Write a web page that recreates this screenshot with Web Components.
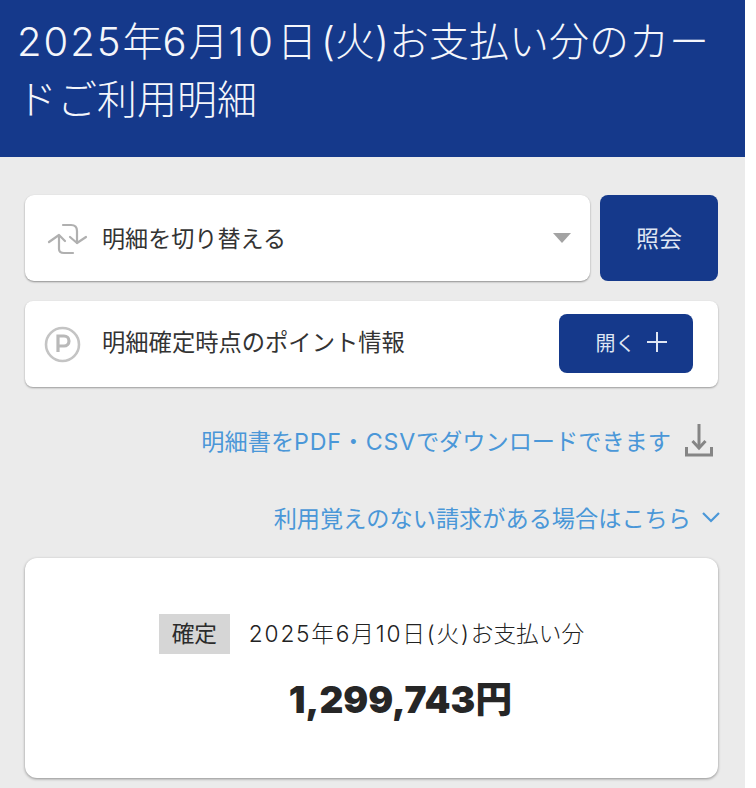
<!DOCTYPE html>
<html lang="ja">
<head>
<meta charset="utf-8">
<style>
html, body { margin: 0; padding: 0; background: #fff; }
body { font-family: Roboto, "Noto Sans CJK JP", sans-serif; width: 745px; height: 788px; overflow: hidden; }
</style>
</head>
<body>
<statement-page></statement-page>

<script>
const FONT = 'Roboto, "Noto Sans CJK JP", sans-serif';
const LATIN = 'Inter, "Noto Sans CJK JP", sans-serif';

class StatementPage extends HTMLElement {
    constructor() {
        super();
        const root = this.attachShadow({mode: 'open'});
        root.innerHTML = `
        <style>
            :host { display: block; background: #ebebeb; height: 788px; font-family: ${FONT}; }
            main { display: flex; flex-direction: column; padding: 38px 27px 0 25px; }
            .search { display: flex; gap: 10px; height: 86px; }
            .search statement-select { flex: 1; }
            point-panel { margin-top: 20px; }
            help-link.pdf { margin-top: 36px; }
            help-link.dispute { margin-top: 43px; }
            total-card { margin-top: 24px; }
        </style>
        <page-header></page-header>
        <main>
            <div class="search">
                <statement-select>明細を切り替える</statement-select>
                <blue-button style="width:118px;font-size:23px;padding-bottom:2px;">照会</blue-button>
            </div>
            <point-panel>明細確定時点のポイント情報</point-panel>
            <help-link class="pdf" icon="download">明細書を<span style="letter-spacing:.800px">PDF・CSV</span>でダウンロードできます</help-link>
            <help-link class="dispute" icon="chevron">利用覚えのない請求がある場合はこちら</help-link>
            <total-card></total-card>
        </main>`;
    }
}

class PageHeader extends HTMLElement {
    constructor() {
        super();
        const root = this.attachShadow({mode: 'open'});
        root.innerHTML = `
        <style>
            :host { display: block; box-sizing: border-box; height: 157px; padding: 13px 30px 0 17px; background: #15398b; color: #f4f6fb; font-family: ${LATIN}; font-weight: 300; font-size: 40px; line-height: 58px; word-break: break-all; }
            .n { letter-spacing: 2px; }
            .m { letter-spacing: 4px; }
            .p { margin-left: 4px; }
        </style>
        <span class="n">2025</span>年<span class="n">6</span>月<span class="m">10</span>日<span class="p">(</span>火)お支払い分のカードご利用明細`;
    }
}

class BlueButton extends HTMLElement {
    constructor() {
        super();
        const root = this.attachShadow({mode: 'open'});
        root.innerHTML = `
        <style>
            :host { display: flex; align-items: center; justify-content: center; box-sizing: border-box; background: #15398b; color: #dfe6f3; border-radius: 8px; }
        </style>
        <slot></slot>`;
    }
}

class StatementSelect extends HTMLElement {
    constructor() {
        super();
        const root = this.attachShadow({mode: 'open'});
        root.innerHTML = `
        <style>
            :host { display: flex; align-items: center; background: #fff; border-radius: 9px; box-shadow: 0 1px 2px rgba(0,0,0,.4); padding: 0 19px 0 21px; color: #333; font-size: 23.100px; }
            svg { flex: none; margin-right: 14px; }
            span { flex: 1; padding-bottom: 3px; }
            i { width: 0; height: 0; border: 9px solid transparent; border-top: 10px solid #a3a3a3; border-bottom: 0; }
        </style>
        <svg width="42" height="34" viewBox="0 0 42 34" fill="none" stroke="#b0b0b0" stroke-width="2.200" stroke-linecap="round" stroke-linejoin="round">
            <path d="M3 21 13 14l6 6"/>
            <path d="M13 15v13q0 4 5 4h9"/>
            <path d="M24 16l7 6 9-6"/>
            <path d="M17 4h8q6 0 6 6v12"/>
        </svg>
        <span><slot></slot></span>
        <i></i>`;
    }
}

class PointPanel extends HTMLElement {
    constructor() {
        super();
        const root = this.attachShadow({mode: 'open'});
        root.innerHTML = `
        <style>
            :host { display: flex; align-items: center; height: 86px; background: #fff; border-radius: 8px; box-shadow: 0 1px 2px rgba(0,0,0,.35); padding: 0 25px 0 19px; color: #333; font-size: 23.300px; }
            svg { flex: none; margin-right: 21px; }
            span { flex: 1; padding-bottom: 6px; }
            blue-button { width: 134px; height: 59px; font-size: 20px; gap: 10px; padding: 0 0 3px 11px; margin-top: -1px; }
        </style>
        <svg width="37" height="37" viewBox="0 0 37 37">
            <circle cx="18.500" cy="18.500" r="16.500" fill="none" stroke="#c4c4c4" stroke-width="2.600"/>
            <path d="M14 26V10h6a4.900 4.900 0 0 1 0 10h-6" fill="none" stroke="#b9b9b9" stroke-width="3.200"/>
        </svg>
        <span><slot></slot></span>
        <blue-button>開く<svg width="22" height="22" viewBox="0 0 22 22" style="margin:0" stroke="#dfe6f3" stroke-width="2"><path d="M11 1v20M1 11h20"/></svg></blue-button>`;
    }
}

class HelpLink extends HTMLElement {
    constructor() {
        super();
        const root = this.attachShadow({mode: 'open'});
        const icons = {
            download: `<svg width="28" height="33" viewBox="0 0 28 33" fill="none" stroke="#858585" stroke-width="3"><path d="M14 0v24"/><path d="M7.500 17 14 24l6.500-7"/><path d="M1.500 23v8h25v-8"/></svg>`,
            chevron: `<svg width="18" height="11" viewBox="0 0 18 11" fill="none" stroke="#4a97d8" stroke-width="2.200"><path d="M1 1l8 8 8-8"/></svg>`
        };
        const type = this.getAttribute('icon');
        root.innerHTML = `
        <style>
            :host { display: flex; align-items: center; justify-content: flex-end; height: 34px; color: #4a97d8; font-family: ${LATIN}; font-size: 23.200px; }
            svg { flex: none; }
            .download { gap: 14px; padding-right: 5px; }
            .chevron { gap: 11px; margin-right: -2px; }
            div { display: flex; align-items: center; }
        </style>
        <div class="${type}"><span><slot></slot></span>${icons[type]}</div>`;
    }
}

class TotalCard extends HTMLElement {
    constructor() {
        super();
        const root = this.attachShadow({mode: 'open'});
        root.innerHTML = `
        <style>
            :host { display: flex; flex-direction: column; align-items: center; box-sizing: border-box; height: 220px; background: #fff; border-radius: 12px; box-shadow: 0 1px 3px rgba(0,0,0,.4); padding-top: 56px; color: #2b2b2b; }
            .row { display: flex; align-items: center; gap: 19px; font-size: 22.700px; }
            .tag { display: flex; align-items: center; justify-content: center; box-sizing: border-box; width: 71px; height: 40px; padding-bottom: 3px; background: #d6d6d6; }
            .date { font-family: ${LATIN}; font-weight: 300; color: #222; padding-bottom: 4px; }
            .date b { font-weight: 300; letter-spacing: 1.800px; }
            .amount { margin-top: 20px; padding-left: 58px; font-family: ${LATIN}; font-size: 37px; font-weight: 900; line-height: 52px; color: #262626; }
        </style>
        <div class="row"><span class="tag">確定</span><span class="date"><b>2025年6月10日(火)</b>お支払い分</span></div>
        <div class="amount">1,299,743円</div>`;
    }
}

customElements.define('page-header', PageHeader);
customElements.define('blue-button', BlueButton);
customElements.define('statement-select', StatementSelect);
customElements.define('point-panel', PointPanel);
customElements.define('help-link', HelpLink);
customElements.define('total-card', TotalCard);
customElements.define('statement-page', StatementPage);
</script>
</body>
</html>
